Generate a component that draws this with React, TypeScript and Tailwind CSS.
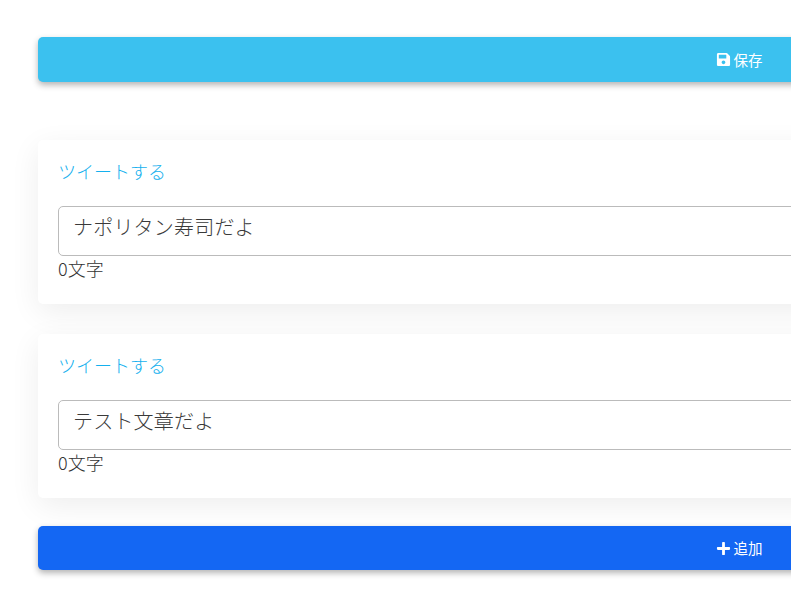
import { FaSave, FaPlus } from "react-icons/fa";

function TweetCard({ text }: { text: string }) {
  return (
    <div className="flex h-[164px] flex-col rounded-[5px] bg-white px-5 pt-[17px] shadow-[0_8px_30px_rgba(0,0,0,0.07)]">
      <a className="h-[28px] text-[18px] font-light leading-[28px] text-[#14b0ee]">ツイートする</a>
      <div className="mt-[21px] h-[50px] w-full rounded-[5px] border border-[#bbbbbb] px-[14px] pt-[5px] text-[20px] font-light leading-[30px] tracking-[0.2px] text-[#3a3a3a]">
        {text}
      </div>
      <p className="h-[26px] text-[18px] font-light leading-[25px] text-[#333333]">0文字</p>
    </div>
  );
}

export default function App() {
  return (
    <div className="h-[592px] w-[791px] overflow-hidden bg-white font-['Noto_Sans_CJK_JP',sans-serif]">
      <div className="w-[1402px] pl-[38px] pt-[37px]">
        <div className="w-[1402px]">
          <button className="flex h-[45px] w-full items-center justify-center gap-[3px] rounded-[5px] bg-[#3bc1ef] text-[14.5px] text-white shadow-[0_3px_6px_rgba(0,0,0,0.3)]">
            <FaSave size={15} />
            <span>保存</span>
          </button>
          <div className="mt-[58px] flex flex-col gap-[30px]">
            <TweetCard text="ナポリタン寿司だよ" />
            <TweetCard text="テスト文章だよ" />
          </div>
          <button className="mt-[28px] flex h-[44px] w-full items-center justify-center gap-[3px] rounded-[5px] bg-[#1467f3] text-[14.5px] text-white shadow-[0_3px_6px_rgba(0,0,0,0.3)]">
            <FaPlus size={15} />
            <span>追加</span>
          </button>
        </div>
      </div>
    </div>
  );
}
